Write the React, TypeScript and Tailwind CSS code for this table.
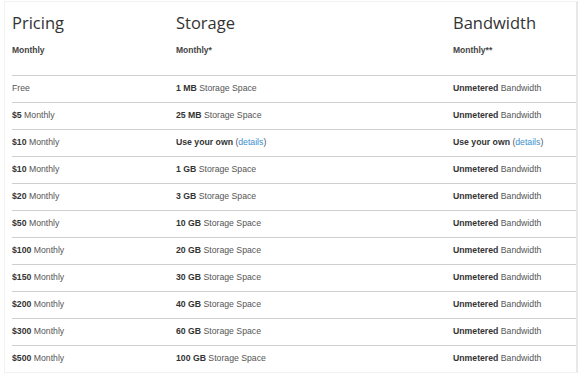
import React from 'react';

type Row = { price: React.ReactNode; storage: React.ReactNode; bandwidth: React.ReactNode };

const details = (
  <>
    <b className="font-bold text-[#333]">Use your own</b> (<a className="text-[#3a8fd0]">details</a>)
  </>
);

const unmetered = (
  <>
    <b className="font-bold text-[#333]">Unmetered</b> Bandwidth
  </>
);

const storage = (size: string) => (
  <>
    <b className="font-bold text-[#333]">{size}</b> Storage Space
  </>
);

const price = (amount: string) => (
  <>
    <b className="font-bold text-[#333]">{amount}</b> Monthly
  </>
);

const rows: Row[] = [
  { price: 'Free', storage: storage('1 MB'), bandwidth: unmetered },
  { price: price('$5'), storage: storage('25 MB'), bandwidth: unmetered },
  { price: price('$10'), storage: details, bandwidth: details },
  { price: price('$10'), storage: storage('1 GB'), bandwidth: unmetered },
  { price: price('$20'), storage: storage('3 GB'), bandwidth: unmetered },
  { price: price('$50'), storage: storage('10 GB'), bandwidth: unmetered },
  { price: price('$100'), storage: storage('20 GB'), bandwidth: unmetered },
  { price: price('$150'), storage: storage('30 GB'), bandwidth: unmetered },
  { price: price('$200'), storage: storage('40 GB'), bandwidth: unmetered },
  { price: price('$300'), storage: storage('60 GB'), bandwidth: unmetered },
  { price: price('$500'), storage: storage('100 GB'), bandwidth: unmetered },
];

export default function App() {
  return (
    <div className="w-[578px] h-[380px] bg-white">
      <div className="ml-[4px] mt-[1px] w-[574px] h-[372px] border border-[#f1f1f1] border-r-2 border-r-[#e8e8e8] pl-[7px]">
        {/* Header */}
        <div className="grid grid-cols-[164px_277px_1fr] h-[73px] text-[#333]">
          {[
            ['Pricing', 'Monthly'],
            ['Storage', 'Monthly*'],
            ['Bandwidth', 'Monthly**'],
          ].map(([title, sub]) => (
            <div key={title}>
              <div className="mt-[10px] text-[16.5px] leading-[22px] font-['Open_Sans',sans-serif]">{title}</div>
              <div className="mt-[10px] text-[8.5px] leading-[12px] font-bold font-['Liberation_Sans',sans-serif] text-[#444]">{sub}</div>
            </div>
          ))}
        </div>

        {/* Rows */}
        <div className="text-[8.7px] font-['Liberation_Sans',sans-serif] text-[#555]">
          {rows.map((r, i) => (
            <div key={i} className="grid grid-cols-[164px_277px_1fr] items-center h-[27px] border-t border-[#cfcfcf]">
              <div>{r.price}</div>
              <div>{r.storage}</div>
              <div>{r.bandwidth}</div>
            </div>
          ))}
        </div>
      </div>
    </div>
  );
}
